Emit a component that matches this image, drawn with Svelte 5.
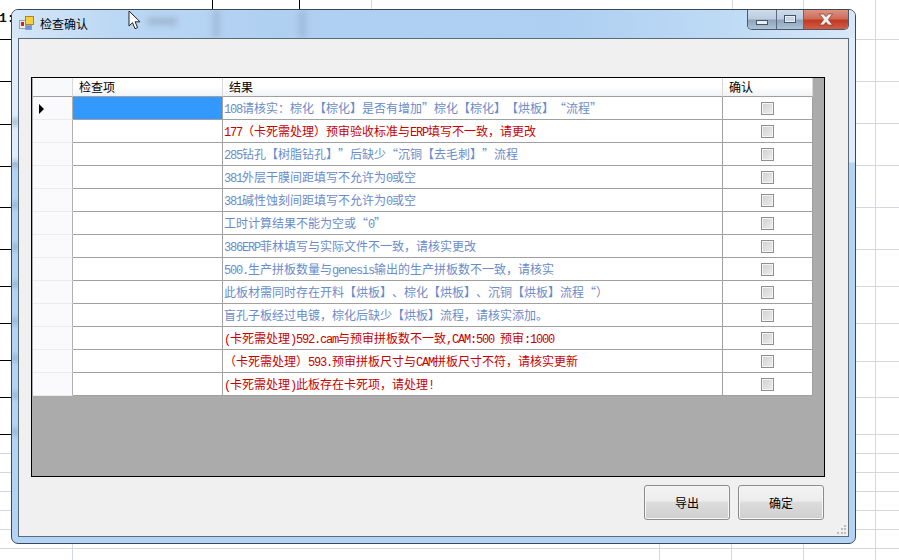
<script>
  const blue = '#6a8cc8';
  const red = '#c80000';
  const rows = [
    ['108请核实：棕化【棕化】是否有增加”棕化【棕化】【烘板】“流程”', blue],
    ['177（卡死需处理）预审验收标准与ERP填写不一致，请更改', red],
    ['285钻孔【树脂钻孔】”后缺少“沉铜【去毛刺】”流程', blue],
    ['381外层干膜间距填写不允许为0或空', blue],
    ['381碱性蚀刻间距填写不允许为0或空', blue],
    ['工时计算结果不能为空或“0”', blue],
    ['386ERP菲林填写与实际文件不一致，请核实更改', blue],
    ['500.生产拼板数量与genesis输出的生产拼板数不一致，请核实', blue],
    ['此板材需同时存在开料【烘板】、棕化【烘板】、沉铜【烘板】流程“）', blue],
    ['盲孔子板经过电镀，棕化后缺少【烘板】流程，请核实添加。', blue],
    ['(卡死需处理)592.cam与预审拼板数不一致,CAM:500 预审:1000', red],
    ['（卡死需处理）593.预审拼板尺寸与CAM拼板尺寸不符，请核实更新', red],
    ['(卡死需处理)此板存在卡死项，请处理!', red]
  ];
  const parts = (s) => s.split(/([\x20-\x7e]+)/).filter(Boolean).map((t) => ({ t, lat: /^[\x20-\x7e]/.test(t) }));

  const leftYs = [39, 81, 124, 166, 207, 249, 286, 323, 360, 397, 434];
  const grayYs = [453, 472, 491, 510, 529, 548];
  const rightYs = [39, 81, 123, 165, 207, 249, 286, 323, 361, 397, 434, 453, 472, 491, 510, 529, 548];
  const spots = [124, 166, 207, 249, 286, 323, 360, 397, 434];
</script>

<div class="desk">
  <svg class="sheet" width="899" height="560" viewBox="0 0 899 560" shape-rendering="crispEdges">
    {#each leftYs as y}<line x1="0" x2="12" y1={y + 0.5} y2={y + 0.5} stroke="#000" />{/each}
    {#each grayYs as y}<line x1="0" x2="899" y1={y + 0.5} y2={y + 0.5} stroke="#d4d8e0" />{/each}
    {#each rightYs as y}<line x1="856" x2="899" y1={y + 0.5} y2={y + 0.5} stroke="#d4d8e0" />{/each}
    {#each [212, 299] as x}<line x1={x + 0.5} x2={x + 0.5} y1="0" y2="10" stroke="#000" />{/each}
    {#each [371, 732, 803] as x}<line x1={x + 0.5} x2={x + 0.5} y1="0" y2="10" stroke="#d4d8e0" />{/each}
    {#each [72, 659, 731, 803] as x}<line x1={x + 0.5} x2={x + 0.5} y1="544" y2="560" stroke="#d4d8e0" />{/each}
    <line x1="875.500" x2="875.500" y1="0" y2="560" stroke="#d4d8e0" />
  </svg>
  <span class="cellnum">1:</span>

  <div class="window">
    {#each spots as y}<i class="spot" style="top:{y - 16}px"></i>{/each}
    <div class="titlebar">
      <i class="smear" style="left:201px;width:7px"></i>
      <i class="smear" style="left:287px;width:7px"></i>
      <i class="smudge"></i>
      <svg class="appicon" width="16" height="16" viewBox="0 0 16 16">
        <rect x="0.500" y="5.500" width="6" height="8" fill="#eeeeee" stroke="#a0a0a0"/>
        <rect x="2" y="7" width="3" height="4" fill="#c8281e"/>
        <rect x="6.500" y="1.500" width="8" height="8" fill="#f6d040" stroke="#a98a20"/>
        <rect x="6.500" y="10.500" width="6" height="4" fill="#6f95d8" stroke="#8aa0c8"/>
      </svg>
      <span class="title">检查确认</span>
      <div class="controls">
        <div class="ctl min"><i></i></div>
        <div class="ctl max"><i></i></div>
        <div class="ctl close">
          <svg width="18" height="13" viewBox="0 0 18 13"><path d="M2.500 1h4.200L9 3.700 11.300 1h4.200l-4.200 5.500L15.500 12h-4.200L9 9.300 6.700 12H2.500l4.200-5.500z" fill="#f2efec" stroke="#7a3a30" stroke-width=".7"/></svg>
        </div>
      </div>
    </div>
    <div class="client">
      <div class="grid">
        <div class="table">
          <div class="row head">
            <div class="c0"></div>
            <div class="c1">检查项</div>
            <div class="c2">结果</div>
            <div class="c3">确认</div>
          </div>
          {#each rows as r, i}
            <div class="row">
              <div class="c0 hdr">
                {#if i === 0}<span class="arrow"></span>{/if}
              </div>
              <div class="c1" class:sel={i === 0}></div>
              <div class="c2 msg" style="color:{r[1]}">
                {#each parts(r[0]) as p}{#if p.lat}<span class="lat">{p.t}</span>{:else}{p.t}{/if}{/each}
              </div>
              <div class="c3 chk"><span class="box"></span></div>
            </div>
          {/each}
        </div>
      </div>
      <div class="buttons">
        <button>导出</button>
        <button>确定</button>
      </div>
      <svg class="grip" width="10" height="10" viewBox="0 0 10 10" fill="#bdbdbd">
        <rect x="7" y="0" width="2" height="2"/><rect x="7" y="3" width="2" height="2"/><rect x="4" y="3" width="2" height="2"/>
        <rect x="7" y="7" width="2" height="2"/><rect x="4" y="7" width="2" height="2"/><rect x="0" y="7" width="2" height="2"/>
      </svg>
    </div>
  </div>

  <svg class="cursor" width="14" height="20" viewBox="0 0 14 20">
    <path d="M1 1v15l3.500-3.300 2.500 6 2.600-1.100-2.500-5.800h4.900z" fill="#fff" stroke="#222" stroke-width="1"/>
  </svg>
</div>

<style>
  :global(body) { margin: 0; background: #fff; }
  .desk {
    position: relative;
    width: 899px;
    height: 560px;
    overflow: hidden;
    font-family: "Noto Sans CJK SC", "Liberation Sans", sans-serif;
    text-spacing-trim: space-all;
    background: #fff;
  }
  .sheet { position: absolute; left: 0; top: 0; }
  .cellnum {
    position: absolute;
    left: -1px;
    top: 12px;
    font: bold 13px/14px "Liberation Mono", monospace;
    color: #111;
  }
  .cursor { position: absolute; left: 128px; top: 10px; }
  .window {
    position: absolute;
    left: 11px;
    top: 9px;
    width: 845px;
    height: 535px;
    box-sizing: border-box;
    border: 1px solid #3a4856;
    border-radius: 7px;
    overflow: hidden;
    background: linear-gradient(#dfecf9 0, #dfecf9 152px, #b4d4f5 153px, #b4d4f5 100%);
    padding: 0 6px 6px;
    display: flex;
    flex-direction: column;
  }
  .spot {
    position: absolute;
    left: 0;
    width: 6px;
    height: 8px;
    background: #8ea8c6;
    opacity: .7;
    filter: blur(2px);
  }
  .titlebar {
    height: 28px;
    flex: none;
    display: flex;
    align-items: center;
    position: relative;
    font-size: 12px;
    color: #000;
    margin: 0 -6px;
    padding: 0 0 2px 7px;
    box-sizing: border-box;
    overflow: hidden;
    background: linear-gradient(90deg, #d6e7f8 0, #bcd8f5 12%, #b0d0f2 30%, #aecff2 65%, #bedaf5 85%, #d8e8f8 100%);
  }
  .smear {
    position: absolute;
    top: 0;
    height: 28px;
    background: #8ba4c0;
    opacity: .5;
    filter: blur(3px);
  }
  .smudge {
    position: absolute;
    left: 135px;
    top: 8px;
    width: 30px;
    height: 7px;
    background: #7e8fa4;
    opacity: .45;
    filter: blur(3px);
  }
  .appicon { position: relative; }
  .title { margin-left: 5px; position: relative; }
  .controls {
    position: absolute;
    right: 6px;
    top: 0;
    display: flex;
    height: 19px;
    border: 1px solid #4a5a6a;
    border-top: none;
    border-radius: 0 0 5px 5px;
    overflow: hidden;
  }
  .ctl {
    display: flex;
    align-items: center;
    justify-content: center;
    box-sizing: border-box;
    background: linear-gradient(#cfdbe9 0, #bccde0 45%, #8fa4bc 55%, #aec2d8 100%);
    border-right: 1px solid #5a6a7a;
  }
  .min { width: 29px; }
  .max { width: 27px; }
  .close {
    width: 44px;
    border-right: none;
    background: linear-gradient(#dc9283 0, #cf6d5a 45%, #c23a22 55%, #d45c46 100%);
  }
  .min i { width: 10px; height: 3px; margin-top: 5px; background: #e8eef4; border: 1px solid #445566; }
  .max i { width: 10px; height: 6px; margin-top: -1px; border: 1px solid #445566; background: #c8d6e6; outline: 1px solid #e8eef4; outline-offset: -2px; }
  .client {
    flex: 1;
    position: relative;
    background: #f0f0f0;
    border: 1px solid #5a6a78;
    padding: 38px 23px 0 12px;
    display: flex;
    flex-direction: column;
    min-height: 0;
  }
  .grid {
    height: 400px;
    flex: none;
    box-sizing: border-box;
    border: 1px solid #000;
    background: #ababab;
  }
  .table { width: 780px; margin-left: 1px; }
  .row {
    display: flex;
    height: 23px;
    background: #fff;
  }
  .row > div { box-sizing: border-box; flex: none; border-right: 1px solid #a0a0a0; border-bottom: 1px solid #a0a0a0; }
  .c0 { width: 40px; }
  .c1 { width: 150px; }
  .c2 { width: 500px; }
  .c3 { width: 90px; }
  .head { height: 19px; background: linear-gradient(#fff 0, #fff 45%, #f0f1f3 100%); font-size: 12px; line-height: 18px; color: #000; }
  .head > div { padding-left: 6px; border-right: 1px solid #d8d8d8; border-bottom: 1px solid #a0a0a0; }
  .head .c0 { padding: 0; background: #f8f9fb; }
  .row > .hdr { background: #fafafc; display: flex; align-items: center; padding-left: 6px; border-right-color: #b0b0b0; border-bottom-color: #ececec; }
  .arrow { width: 0; height: 0; border-left: 5px solid #000; border-top: 5px solid transparent; border-bottom: 5px solid transparent; margin-top: 1px; }
  .row > .sel { background: #3399ff; }
  .msg { font-size: 12px; line-height: 22px; padding-left: 1px; white-space: nowrap; overflow: hidden; }
  .lat { font-family: "Liberation Mono", monospace; font-size: 12px; letter-spacing: -1.2px; white-space: pre; }
  .chk { display: flex; align-items: center; justify-content: center; }
  .box {
    width: 11px; height: 11px;
    border: 1px solid #8e8f8f;
    background: linear-gradient(135deg, #cfd0d2 0, #ededed 100%);
    box-shadow: inset 0 0 0 1px #f4f4f4;
  }
  .buttons {
    display: flex;
    justify-content: flex-end;
    gap: 8px;
    margin: 8px 1px 0 0;
  }
  button {
    width: 86px;
    height: 35px;
    box-sizing: border-box;
    border: 1px solid #8c8c8c;
    border-radius: 3px;
    background: linear-gradient(#f3f3f3 0, #ececec 45%, #dcdcdc 50%, #cfcfcf 100%);
    box-shadow: inset 0 0 0 1px #f6f6f6;
    font: 12px "Noto Sans CJK SC", sans-serif;
    color: #000;
    padding: 0;
  }
  .grip { position: absolute; right: 1px; bottom: 1px; }
</style>
